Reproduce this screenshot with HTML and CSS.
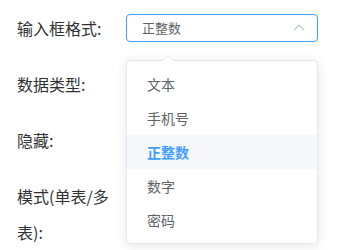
FILE: index.html
```html
<!DOCTYPE html>
<html lang="zh">
<head>
<meta charset="utf-8">
<link rel="stylesheet" href="styles.css">
</head>
<body>
<form class="form">
  <div class="item">
    <label class="label">输入框格式:</label>
    <div class="control">
      <div class="select">
        <span class="select-value">正整数</span>
        <svg class="chevron" width="12" height="7" viewBox="0 0 12 7"><path d="M1 6.2 L6 1.2 L11 6.2" fill="none" stroke="#C0C4CC" stroke-width="1.2"/></svg>
      </div>
      <div class="dropdown">
        <span class="arrow"></span>
        <ul class="options">
          <li class="option">文本</li>
          <li class="option">手机号</li>
          <li class="option selected">正整数</li>
          <li class="option">数字</li>
          <li class="option">密码</li>
        </ul>
      </div>
    </div>
  </div>
  <div class="item">
    <label class="label">数据类型:</label>
    <div class="control"></div>
  </div>
  <div class="item">
    <label class="label">隐藏:</label>
    <div class="control"></div>
  </div>
  <div class="item">
    <label class="label">模式(单表/多表):</label>
    <div class="control"></div>
  </div>
</form>
</body>
</html>
```
FILE: styles.css
```css
html, body {
  margin: 0;
  background: #fff;
}
body {
  font-family: "Noto Sans CJK SC", "Noto Sans", sans-serif;
}
.form {
  padding: 10px 0 0 17px;
  display: flex;
  flex-direction: column;
  gap: 20px;
}
.item {
  display: flex;
  align-items: flex-start;
}
.label {
  width: 97px;
  padding-right: 12px;
  font-size: 16px;
  line-height: 36px;
  color: #303133;
}
.control {
  position: relative;
  width: 192px;
  min-height: 36px;
  display: flex;
  align-items: center;
}
.select {
  box-sizing: border-box;
  width: 192px;
  height: 28px;
  border: 1px solid #409EFF;
  border-radius: 4px;
  padding: 0 12px 0 15px;
  display: flex;
  align-items: center;
  justify-content: space-between;
}
.select-value {
  font-size: 13px;
  color: #606266;
  line-height: 26px;
}
.chevron {
  display: block;
  margin-bottom: 1px;
}
.dropdown {
  position: absolute;
  left: 0;
  top: 50px;
  box-sizing: border-box;
  width: 192px;
  background: #fff;
  border: 1px solid #E4E7ED;
  border-radius: 4px;
  box-shadow: 0 2px 12px 0 rgba(0, 0, 0, 0.1);
  z-index: 10;
}
.arrow {
  position: absolute;
  left: 35px;
  top: -6px;
  width: 0;
  height: 0;
  border-left: 6px solid transparent;
  border-right: 6px solid transparent;
  border-bottom: 6px solid #E4E7ED;
}
.arrow::after {
  content: "";
  position: absolute;
  left: -6px;
  top: 1px;
  border-left: 6px solid transparent;
  border-right: 6px solid transparent;
  border-bottom: 6px solid #fff;
}
.options {
  list-style: none;
  margin: 0;
  padding: 6px 0;
}
.option {
  height: 34px;
  line-height: 34px;
  padding: 0 20px;
  font-size: 14px;
  color: #606266;
}
.option.selected {
  color: #409EFF;
  font-weight: bold;
  background: #F5F7FA;
}
```
